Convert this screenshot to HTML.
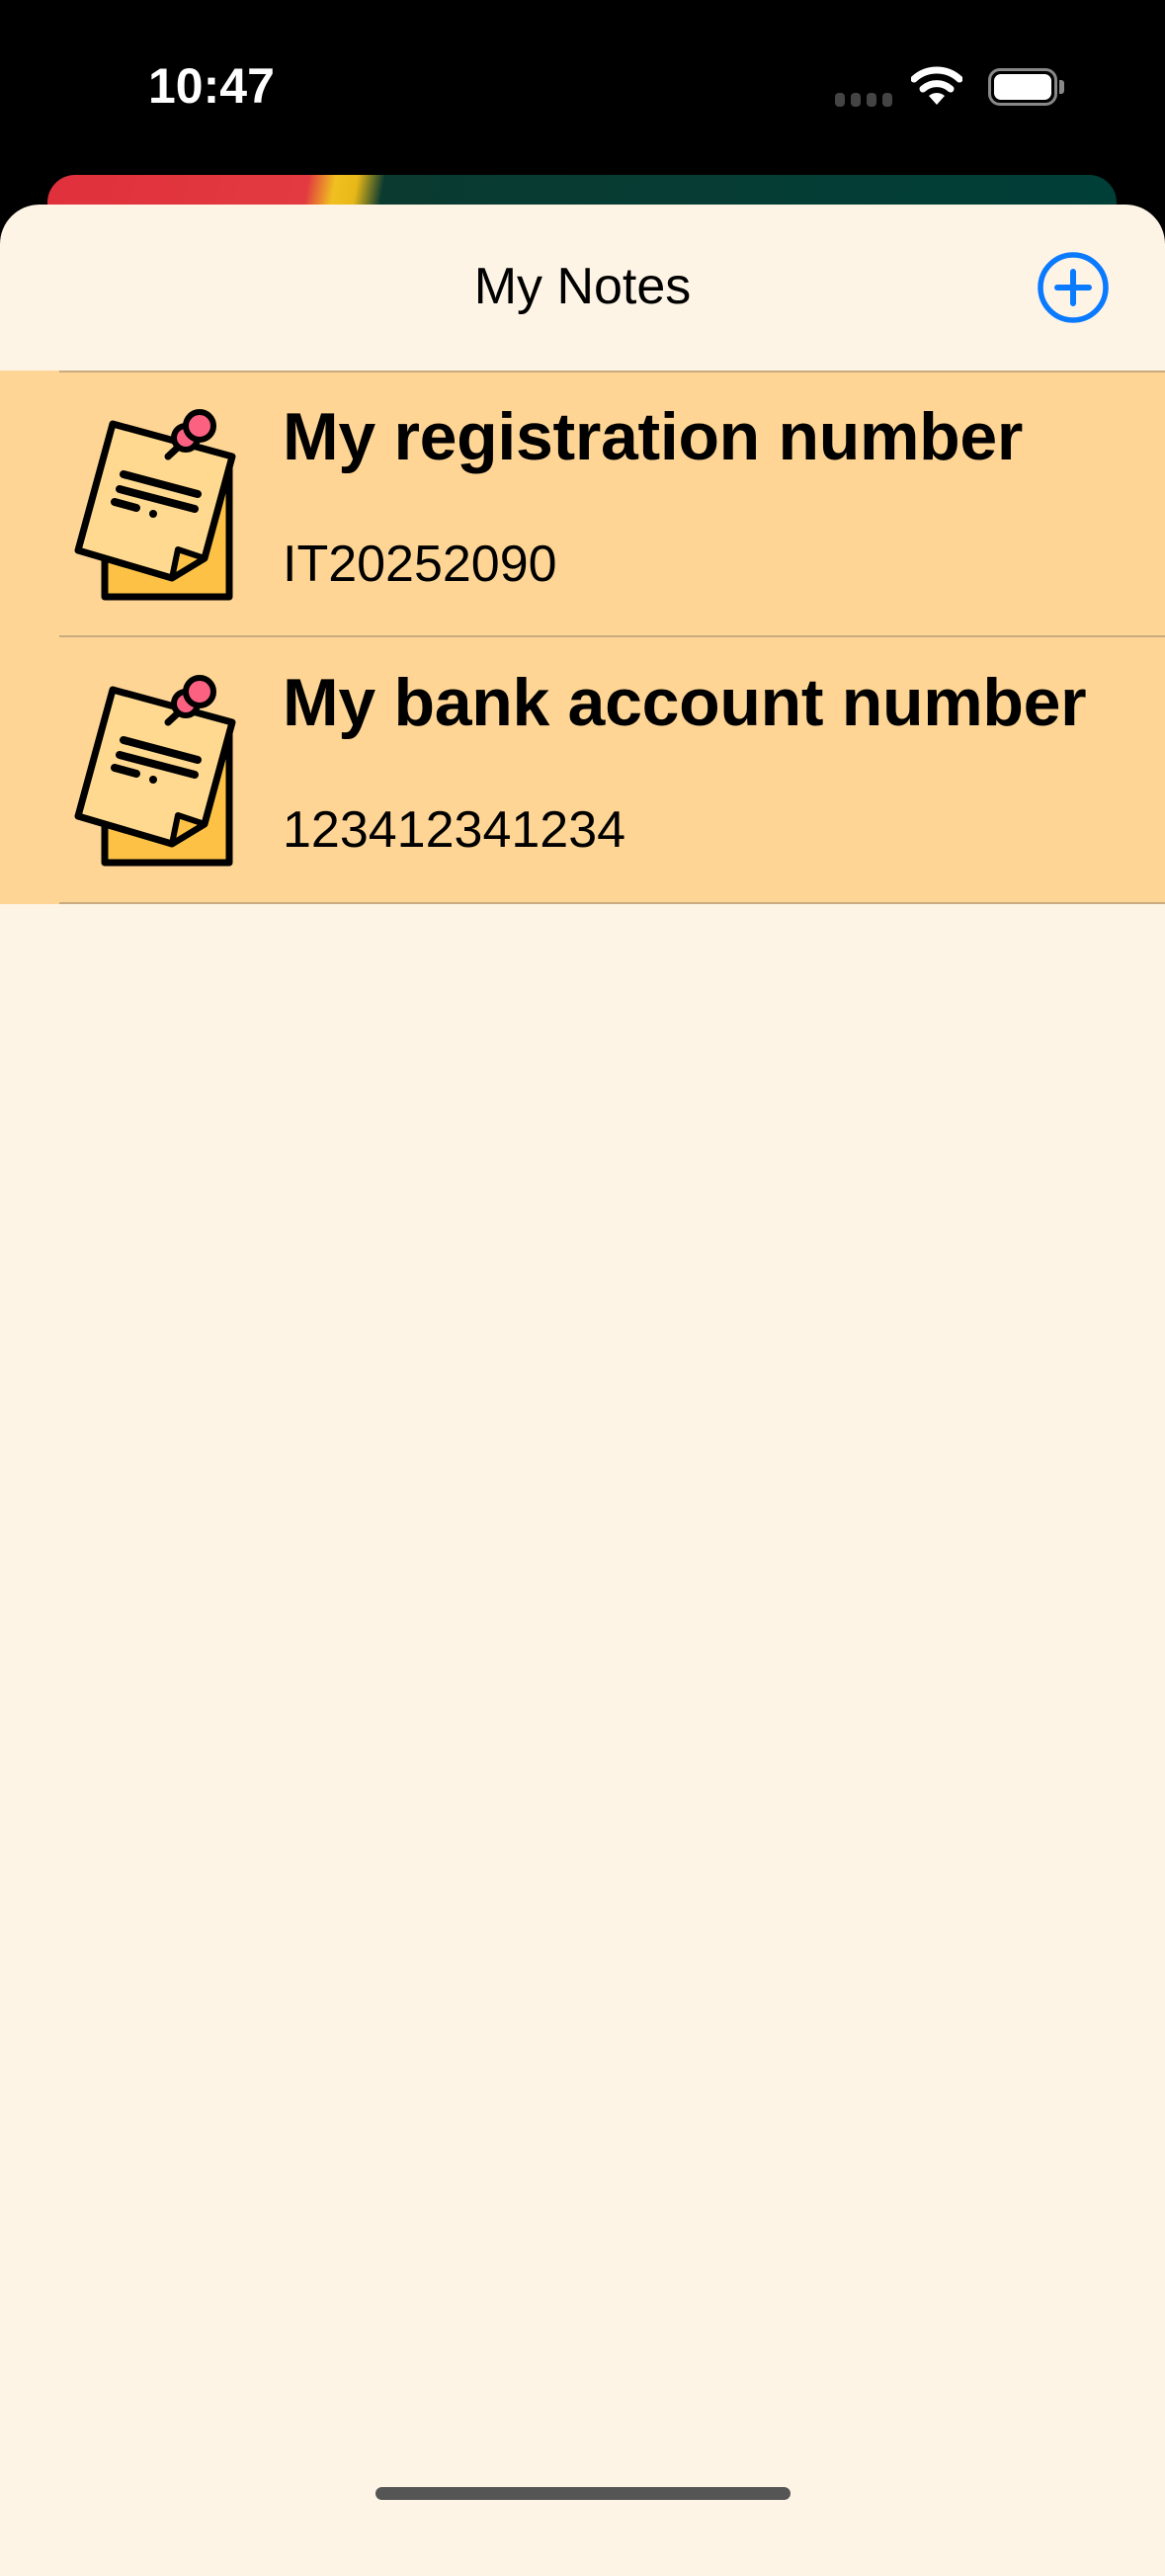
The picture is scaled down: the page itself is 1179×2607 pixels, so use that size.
<!DOCTYPE html>
<html><head><meta charset="utf-8"><style>
*{margin:0;padding:0;box-sizing:border-box}
body{width:1179px;height:2556px;background:#000;position:relative;overflow:hidden;font-family:"Liberation Sans",sans-serif}
.card{position:absolute;left:48px;top:177px;width:1082px;height:120px;border-radius:28px;background:linear-gradient(100deg,#e0303c 0%,#e23a40 24%,#f0c020 26.5%,#e8b818 28.5%,#0a3a30 31%,#003f38 100%)}
.sheet{position:absolute;left:0;top:207px;width:1179px;height:2400px;background:#fef4e5;border-radius:40px 40px 0 0}
.title{position:absolute;top:260px;left:0;width:1179px;text-align:center;font-size:52px;color:#000}
.row{position:absolute;left:0;width:1179px;height:270px;background:#fed594}
.sep{position:absolute;left:60px;right:0;height:2px;background:#c9ab7f}
.t{position:absolute;left:286px;font-weight:bold;font-size:68px;color:#000;letter-spacing:-0.3px}
.s{position:absolute;left:286px;font-size:52px;color:#000}
.home{position:absolute;left:380px;top:2517px;width:420px;height:13px;border-radius:7px;background:#555}
</style></head><body>
<div style="position:absolute;left:150px;top:58px;font-size:50px;font-weight:bold;color:#fff">10:47</div>
<div style="position:absolute;left:845px;top:94px;width:58px;height:14px">
<span style="position:absolute;left:0;width:10px;height:14px;border-radius:4px;background:#444"></span>
<span style="position:absolute;left:16px;width:10px;height:14px;border-radius:4px;background:#444"></span>
<span style="position:absolute;left:32px;width:10px;height:14px;border-radius:4px;background:#444"></span>
<span style="position:absolute;left:48px;width:10px;height:14px;border-radius:4px;background:#444"></span></div>
<svg style="position:absolute;left:922px;top:66px" width="52" height="42" viewBox="0 0 52 42"><path d="M3 14 A34 34 0 0 1 49 14" stroke="#fff" stroke-width="7" fill="none" stroke-linecap="round"/><path d="M12 24 A21 21 0 0 1 40 24" stroke="#fff" stroke-width="7" fill="none" stroke-linecap="round"/><path d="M18 31 L26 40 L34 31 A12 12 0 0 0 18 31Z" fill="#fff"/></svg>
<div style="position:absolute;left:1000px;top:69px;width:70px;height:38px;border:3px solid #888;border-radius:12px"><div style="position:absolute;left:3px;top:3px;right:3px;bottom:3px;background:#fff;border-radius:7px"></div></div>
<div style="position:absolute;left:1072px;top:81px;width:5px;height:14px;background:#888;border-radius:0 3px 3px 0"></div>
<div class="card"></div>
<div class="sheet"></div>
<div class="title">My Notes</div>
<svg style="position:absolute;left:1047px;top:255px" width="78" height="72" viewBox="0 0 78 72"><circle cx="39" cy="36" r="33" fill="none" stroke="#0a7aff" stroke-width="5.5"/><path d="M39 20V52M23 36H55" stroke="#0a7aff" stroke-width="6" stroke-linecap="round"/></svg>

<div class="row" style="top:375px"></div>
<div class="row" style="top:645px"></div>
<div class="sep" style="top:375px"></div>
<div class="sep" style="top:643px"></div>
<div class="sep" style="top:913px"></div>

<svg width="0" height="0" style="position:absolute"><defs><g id="note">
<rect x="106" y="470" width="126" height="134" fill="#fdc245" stroke="#000" stroke-width="7" stroke-linejoin="round"/>
<path d="M114 429 L235 462 L207 565 L174 585 L79 557 Z" fill="#fed98f" stroke="#000" stroke-width="7" stroke-linejoin="round"/>
<path d="M180 556 L174 585 L207 565 Z" fill="#fdc245" stroke="#000" stroke-width="6" stroke-linejoin="round"/>
<path d="M125 480 L200 500 M121 495 L197 515 M116 508 L138 514" stroke="#000" stroke-width="8" stroke-linecap="round"/>
<circle cx="155" cy="520" r="4" fill="#000"/>
<path d="M170 462 L183 450" stroke="#000" stroke-width="7" stroke-linecap="round"/>
<circle cx="188" cy="443" r="12" fill="#fc6181" stroke="#000" stroke-width="6"/>
<circle cx="202" cy="431" r="14" fill="#fc6181" stroke="#000" stroke-width="6"/>
</g></defs></svg>
<svg style="position:absolute;left:0;top:0" width="300" height="1000"><use href="#note"/><use href="#note" y="269"/></svg>

<div class="t" style="top:403px">My registration number</div>
<div class="s" style="top:541px">IT20252090</div>
<div class="t" style="top:672px">My bank account number</div>
<div class="s" style="top:810px">123412341234</div>
<div class="home"></div>
</body></html>
